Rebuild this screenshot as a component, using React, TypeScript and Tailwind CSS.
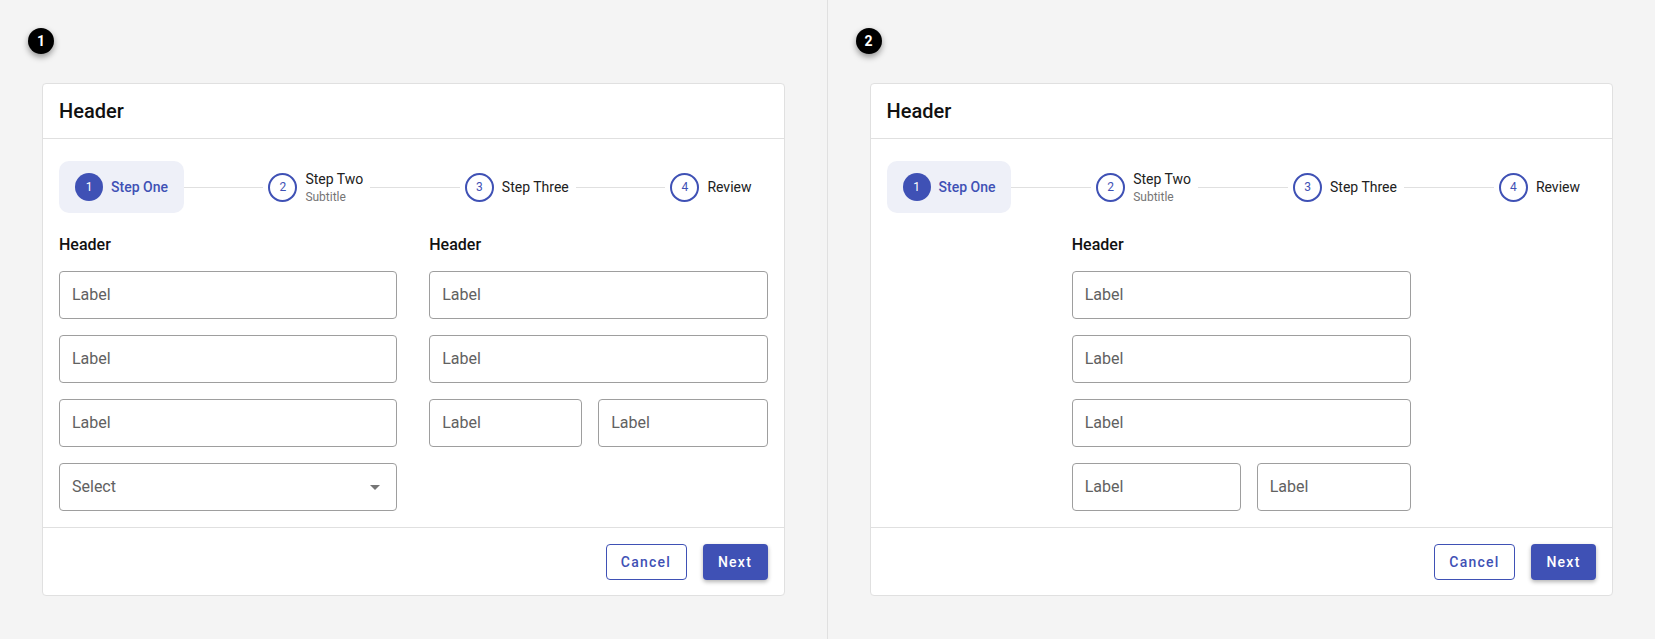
import React from "react";

const FONT = { fontFamily: "Roboto, 'Noto Sans', 'Liberation Sans', sans-serif" };

function Field({ label, className = "" }: { label: string; className?: string }) {
  return (
    <div
      className={`h-12 flex items-center px-3 border border-[#9e9e9e] rounded-[4px] bg-white text-base text-[#616161] ${className}`}
    >
      {label}
    </div>
  );
}

function SelectField() {
  return (
    <div className="h-12 flex items-center justify-between pl-3 pr-4 border border-[#9e9e9e] rounded-[4px] bg-white text-base text-[#616161]">
      <span>Select</span>
      <svg width="10" height="5" viewBox="0 0 10 5">
        <path d="M0 0 L10 0 L5 5 Z" fill="#757575" />
      </svg>
    </div>
  );
}

function StepCircle({ n }: { n: number }) {
  return (
    <div className="w-[29px] h-[29px] shrink-0 rounded-full border-2 border-[#3f51b5] bg-white text-[#3f51b5] text-xs flex items-center justify-center">
      {n}
    </div>
  );
}

function Stepper() {
  return (
    <div className="flex items-center h-[52px]">
      <div className="flex items-center h-full px-4 rounded-[10px] bg-[#eef0f8]">
        <div className="w-7 h-7 shrink-0 rounded-full bg-[#3f51b5] text-white text-xs flex items-center justify-center">
          1
        </div>
        <span className="ml-2 text-sm font-medium text-[#3f51b5] whitespace-nowrap">Step One</span>
      </div>
      <div className="flex-[78] h-px bg-[#e0e0e0]" />
      <div className="flex items-center pl-[5px] pr-[7px]">
        <StepCircle n={2} />
        <div className="ml-2 flex flex-col">
          <span className="text-sm leading-5 text-[#212121] whitespace-nowrap">Step Two</span>
          <span className="text-xs leading-4 text-[#757575]">Subtitle</span>
        </div>
      </div>
      <div className="flex-[88] h-px bg-[#e0e0e0]" />
      <div className="flex items-center pl-[5px] pr-[7px]">
        <StepCircle n={3} />
        <span className="ml-2 text-sm text-[#212121] whitespace-nowrap">Step Three</span>
      </div>
      <div className="flex-[88] h-px bg-[#e0e0e0]" />
      <div className="flex items-center pl-[5px] pr-4">
        <StepCircle n={4} />
        <span className="ml-2 text-sm text-[#212121] whitespace-nowrap">Review</span>
      </div>
    </div>
  );
}

function ColumnHeader() {
  return <div className="text-base font-medium leading-6 text-[#111] mb-[14px]">Header</div>;
}

function Card({ children }: { children: React.ReactNode }) {
  return (
    <div className="w-full bg-white border border-[#e0e0e0] rounded-[4px] flex flex-col">
      <div className="h-[55px] flex items-center px-4 border-b border-[#e0e0e0] text-xl font-medium text-[#111]">
        Header
      </div>
      <div className="px-4 pt-[22px] pb-4">
        <Stepper />
        <div className="mt-5">{children}</div>
      </div>
      <div className="border-t border-[#e0e0e0] pt-4 pb-[15px] px-4 flex justify-end gap-4">
        <button className="w-[81px] h-9 rounded-[4px] border border-[#3f51b5] bg-white text-[#3f51b5] text-sm font-medium tracking-[1.25px] flex items-center justify-center">
          Cancel
        </button>
        <button className="w-[65px] h-9 rounded-[4px] bg-[#3f51b5] text-white text-sm font-medium tracking-[1.25px] flex items-center justify-center shadow-[0_2px_4px_rgba(0,0,0,0.3)]">
          Next
        </button>
      </div>
    </div>
  );
}

function Badge({ n }: { n: number }) {
  return (
    <div className="absolute left-[28px] top-[28px] w-[26px] h-[26px] rounded-full bg-black text-white text-sm font-bold flex items-center justify-center shadow-[0_3px_6px_rgba(0,0,0,0.4)]">
      {n}
    </div>
  );
}

export default function App() {
  return (
    <div style={FONT} className="w-full min-h-[639px] h-screen bg-[#f4f4f4] grid grid-cols-2">
      <div className="relative px-[42px] pt-[83px] border-r border-[#e0e0e0]">
        <Badge n={1} />
        <Card>
          <div className="grid grid-cols-2 gap-8">
            <div className="flex flex-col">
              <ColumnHeader />
              <div className="flex flex-col gap-4">
                <Field label="Label" />
                <Field label="Label" />
                <Field label="Label" />
                <SelectField />
              </div>
            </div>
            <div className="flex flex-col">
              <ColumnHeader />
              <div className="flex flex-col gap-4">
                <Field label="Label" />
                <Field label="Label" />
                <div className="flex gap-4">
                  <Field label="Label" className="w-[153px] shrink-0" />
                  <Field label="Label" className="flex-1" />
                </div>
              </div>
            </div>
          </div>
        </Card>
      </div>
      <div className="relative px-[42px] pt-[83px]">
        <Badge n={2} />
        <Card>
          <div className="flex justify-center">
            <div className="w-[339px] flex flex-col">
              <ColumnHeader />
              <div className="flex flex-col gap-4">
                <Field label="Label" />
                <Field label="Label" />
                <Field label="Label" />
                <div className="flex gap-4">
                  <Field label="Label" className="w-[169px] shrink-0" />
                  <Field label="Label" className="flex-1" />
                </div>
              </div>
            </div>
          </div>
        </Card>
      </div>
    </div>
  );
}
